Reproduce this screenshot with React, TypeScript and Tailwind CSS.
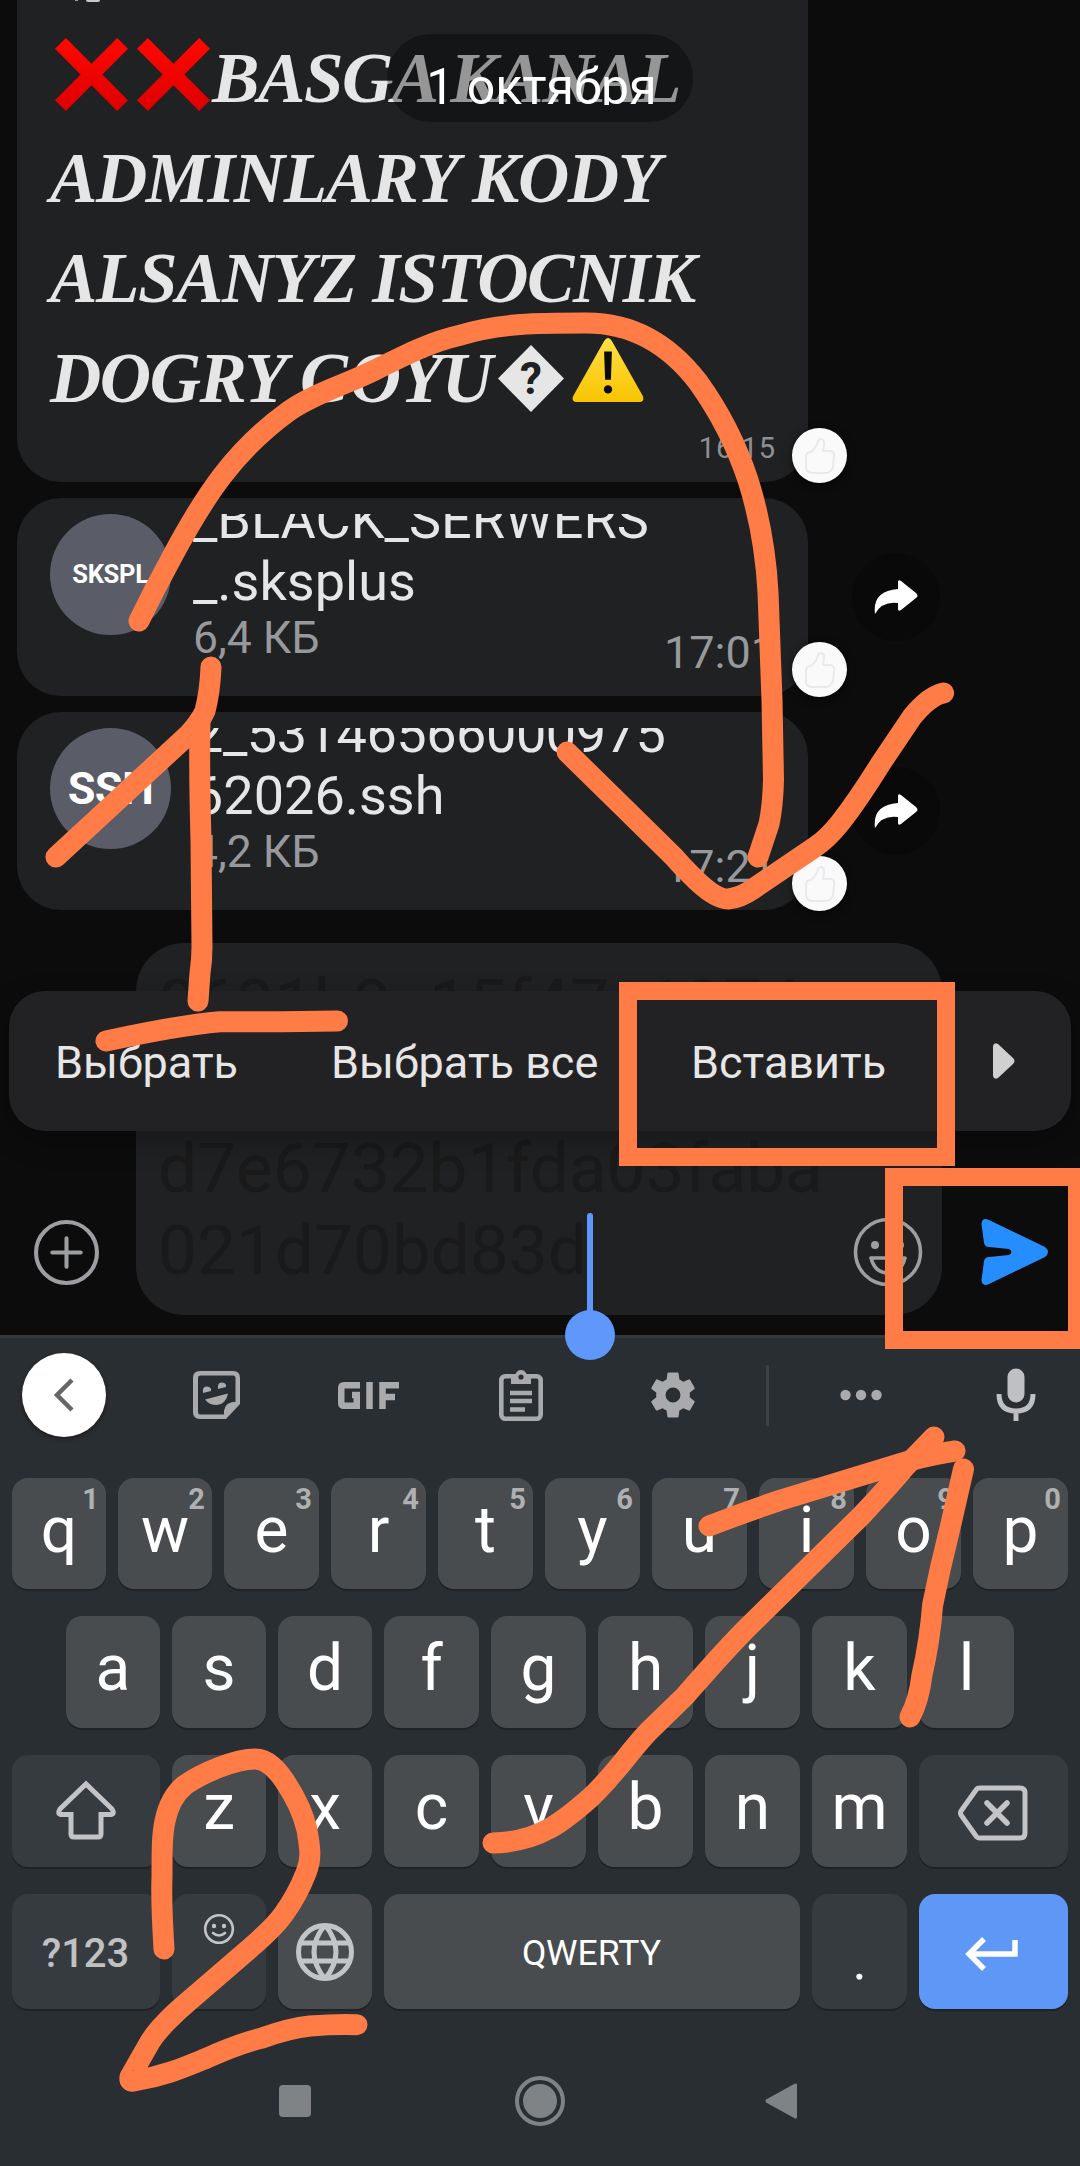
import React from "react";

const ink: string[] = [
  "M139 621Q155 588 172 557C205 495 235 450 289 411C315 393 345 385 375 370C405 355 430 342 461 335C500 323 540 323 584 323C640 322 675 352 698 382C724 418 738 450 748 480C760 518 766 555 768 592L772 700L773.5 780C773 800 772 810 769 824L758 857",
  "M567 752L616 800L674 857C684 869 690 874 697 881Q716 899 728 899Q740 898 753 889L815 847C824 841 832 833 840 823C855 804 868 784 881 763L912 717Q929 696 943.6 693",
  "M56 857L188 735Q200 722 205 711Q210 692 211 667",
  "M200 720Q199 770 201 840L202 947Q202 960 200 973L198 1001",
  "M106 1041Q180 1025 220 1021.7H282L337.5 1021",
  "M164 1949Q161 1900 162 1877C162 1850 162 1835 165 1821Q170 1797 185 1785C202 1773 235 1759 255 1759C268 1759 277 1770 284 1780C296 1798 304 1816 307 1830C310 1848 312 1858 306 1873Q297 1896 283 1915C272 1930 260 1939 248 1950L190 2000C172 2015 156 2032 150 2042L130 2077Q129 2082 134 2081C165 2076 185 2067 207 2058Q238 2044 262 2038Q290 2028 310 2026Q335 2024 357 2024.7",
  "M493 1843C540 1842 565 1820 590 1798C614 1776 632 1748 650 1730L685 1696C706 1672 725 1650 747 1628L861 1516Q892 1483 905 1467L934 1437",
  "M709 1526Q745 1512 781 1500L912 1460Q935 1454 955 1451",
  "M963.5 1469L950 1528L940 1570L932.6 1605Q930 1640 922 1675Q919 1700 910 1717",
];

function InkLayer() {
  return (
    <>
      <svg className="pointer-events-none absolute inset-0 z-40" width="1080" height="2166" viewBox="0 0 1080 2166" fill="none" stroke="#ff7c46" strokeWidth="21" strokeLinecap="round" strokeLinejoin="round">
        {ink.map((d) => (
          <path key={d} d={d} />
        ))}
      </svg>
      <div className="absolute left-[619px] top-[982px] z-40 h-[184px] w-[336px] border-[18px] border-[#ff7c46]" />
      <div className="absolute left-[885px] top-[1168px] z-40 h-[181px] w-[195px] border-[18px] border-r-[12px] border-[#ff7c46]" />
    </>
  );
}

function CrossMark() {
  return (
    <svg width="73" height="73" viewBox="0 0 74 74" className="shrink-0">
      <defs>
        <linearGradient id="cross" x1="0" y1="0" x2="0" y2="1">
          <stop offset="0" stopColor="#ff0800" />
          <stop offset="1" stopColor="#dd0000" />
        </linearGradient>
      </defs>
      <path d="M11 0L37 26L63 0L74 11L48 37L74 63L63 74L37 48L11 74L0 63L26 37L0 11Z" fill="url(#cross)" />
    </svg>
  );
}

function WarningSign() {
  return (
    <svg width="74" height="66" viewBox="0 0 76 68">
      <defs>
        <linearGradient id="warn" x1="0" y1="0" x2="0" y2="1">
          <stop offset="0" stopColor="#ffdf45" />
          <stop offset="1" stopColor="#f8c400" />
        </linearGradient>
      </defs>
      <path d="M38 1Q40 1 42 4L74 61Q76 67 70 67H6Q0 67 2 61L34 4Q36 1 38 1Z" fill="url(#warn)" />
      <path d="M34 15H42L41 44H35Z" fill="#0c0c0c" />
      <circle cx="38" cy="54" r="4.3" fill="#0c0c0c" />
    </svg>
  );
}

function UnknownGlyph() {
  return (
    <div className="relative flex h-[67px] w-[66px] items-center justify-center">
      <svg width="66" height="67" viewBox="0 0 66 67" className="absolute inset-0">
        <path d="M33 0L66 33.5L33 67L0 33.5Z" fill="#e6e6e6" />
      </svg>
      <span className="relative font-['Roboto',sans-serif] text-[44px] font-bold leading-none tracking-normal text-[#202122]">?</span>
    </div>
  );
}

function ThumbBadge() {
  return (
    <div className="absolute -bottom-px right-[-39px] z-10 flex size-[55px] items-center justify-center rounded-full bg-[#fafafa] shadow-[0_2px_8px_rgba(0,0,0,0.6)]">
      <svg width="32" height="36" viewBox="0 0 32 36" fill="none" stroke="#e9e9ee" strokeWidth="2" strokeLinejoin="round">
        <path d="M2 19Q2 14 7 14Q13 9 14 3Q15 1 17 1Q21 2 20 7L19 13H27Q31 14 30 19L29 29Q27 34 23 35H8Q2 34 2 30Z" />
      </svg>
    </div>
  );
}

function ShareButton() {
  return (
    <div className="ml-[44px] mt-[55px] flex size-[88px] items-center justify-center rounded-full bg-[#090909]">
      <svg width="44" height="34" viewBox="0 0 44 34" fill="#fff">
        <path d="M24 2Q24 -1 27 1L42 13Q45 16 42 18L27 30Q24 32 24 29V23Q8 21 1 34Q-2 11 24 9Z" />
      </svg>
    </div>
  );
}

type FileMsg = { ext: string; small: boolean; name: string[]; size: string; time: string };

const files: FileMsg[] = [
  { ext: "SKSPL", small: true, name: ["_BLACK_SERWERS", "_.sksplus"], size: "6,4 КБ", time: "17:01" },
  { ext: "SSH", small: false, name: ["2_53146566000975", "62026.ssh"], size: "4,2 КБ", time: "17:21" },
];

function FileMessage({ f }: { f: FileMsg }) {
  return (
    <div className="flex h-[198px]">
      <div className="relative flex w-[791px] rounded-[44px] bg-[#202122] pl-[33px] pt-4">
        <div className="flex size-[121px] shrink-0 items-center justify-center rounded-full bg-[#5a5d68] font-bold text-white">
          <span className={f.small ? "text-[25.5px] leading-none tracking-[-0.3px]" : "text-[45px] leading-none tracking-[-0.5px]"}>{f.ext}</span>
        </div>
        <div className="ml-[22px] grow">
          <div className="flex h-[100px] flex-col justify-end overflow-hidden text-[54px] leading-[62.7px] text-[#e6e6e6]">
            <p className={f.small ? "whitespace-pre" : "whitespace-pre tracking-[-0.45px]"}>{f.name[0]}</p>
            <p className="whitespace-pre">{f.name[1]}</p>
          </div>
          <p className="mt-[-1px] text-[44.5px] leading-[50px] text-[#97999c]">{f.size}</p>
        </div>
        <span className="absolute bottom-[18px] right-[32px] text-[45px] leading-[50px] text-[#97999c]">{f.time}</span>
        <ThumbBadge />
      </div>
      <ShareButton />
    </div>
  );
}

function LongMessage() {
  return (
    <div className="relative h-[482px] w-[791px] rounded-b-[44px] bg-[#202122]">
      <div className="absolute left-[58px] top-0 flex gap-2">
        <i className="block h-px w-[3px] bg-[#9a9a9a]" />
        <i className="block h-[2px] w-[14px] rounded-b bg-[#c8c8c8]" />
      </div>
      <div className="flex flex-col pl-[33px] pt-[28px] font-['Liberation_Serif',serif] text-[71px] font-bold italic leading-[100px] tracking-[-1.4px] text-[#e6e6e6]">
        <div className="flex h-[100px] whitespace-nowrap">
          <span className="mt-[10px] flex gap-[9px] pl-[5px]">
            <CrossMark />
            <CrossMark />
          </span>
          <span className="ml-[2px]">BASGA KANAL</span>
        </div>
        <span className="whitespace-nowrap">ADMINLARY KODY</span>
        <span className="whitespace-nowrap">ALSANYZ ISTOCNIK</span>
        <div className="flex h-[100px] whitespace-nowrap">
          <span className="w-[446px]">DOGRY GOYU</span>
          <span className="ml-[2px] mt-[17px] not-italic">
            <UnknownGlyph />
          </span>
          <span className="ml-[7px] mt-[9px]">
            <WarningSign />
          </span>
        </div>
      </div>
      <span className="absolute bottom-[17px] right-[32px] text-[29px] leading-[34px] tracking-[1px] text-[#8e9093]">16:15</span>
      <ThumbBadge />
    </div>
  );
}

function Chat() {
  return (
    <div className="relative h-[1335px] overflow-hidden bg-[#0c0c0c]">
      <div className="flex flex-col gap-4 pl-[17px]">
        <LongMessage />
        {files.map((f) => (
          <FileMessage key={f.ext} f={f} />
        ))}
      </div>
      <div className="absolute left-[387px] top-[34px] z-20 h-[88px] w-[306px] rounded-[44px] bg-black/35">
        <div className="mx-auto mt-[20px] h-[51px] overflow-hidden pl-[3px] text-center text-[50px] leading-[68px] text-white">
          <span className="-mt-[1px] block whitespace-nowrap">1 октября</span>
        </div>
      </div>
      <Composer />
      <ContextMenu />
    </div>
  );
}

function Composer() {
  return (
    <div className="mt-[33px] flex h-[372px] items-end">
      <div className="flex h-[126px] w-[136px] items-center pl-[33px]">
        <svg width="67" height="67" viewBox="0 0 66 66" fill="none" stroke="#9c9ea1" strokeWidth="4" strokeLinecap="round">
          <circle cx="33" cy="33" r="30" />
          <path d="M33 19V47M19 33H47" />
        </svg>
      </div>
      <div className="flex h-full w-[806px] items-end rounded-[48px] bg-[#202123] pl-[22px]">
        <div className="mb-[23px] grow whitespace-pre text-[69.3px] leading-[82px] text-[#1a1a1a]">
          <p className="mb-[82px]">8691b9a15f47c1974</p>
          <p>d7e6732b1fda03faba</p>
          <p>021d70bd83d</p>
        </div>
        <div className="flex h-[126px] w-[89px] shrink-0 items-center">
          <svg width="70" height="70" viewBox="0 0 70 70" fill="none" stroke="#9c9ea1" strokeWidth="3.6" strokeLinejoin="round">
            <circle cx="35" cy="35" r="32.5" />
            <circle cx="22" cy="28" r="4" fill="#9c9ea1" stroke="none" />
            <circle cx="47" cy="28" r="4" fill="#9c9ea1" stroke="none" />
            <path d="M18 41H52Q48 56 35 56Q22 56 18 41Z" />
          </svg>
        </div>
      </div>
      <div className="flex h-[126px] items-center pl-[39px]">
        <svg width="68" height="68" viewBox="0 0 68 68" fill="#268dff">
          <path d="M0.5 6Q1 -1 8 2L64 29Q70 34 64 39L8 66Q1 69 0.5 62L3 43Q4 39 8 39L28 37Q33 34 28 31L8 29Q4 29 3 25Z" />
        </svg>
      </div>
    </div>
  );
}

function ContextMenu() {
  return (
    <div className="absolute left-[9px] top-[991px] z-20 flex h-[140px] w-[1062px] items-center rounded-[36px] bg-[#222224] pl-[46px] text-[45px] leading-[52px] text-[#e6e6e6] shadow-[0_10px_28px_rgba(0,0,0,0.28)]">
      <span className="w-[276px] pt-[3px]">Выбрать</span>
      <span className="w-[360px] pt-[3px]">Выбрать все</span>
      <span className="w-[301px] pt-[3px]">Вставить</span>
      <svg width="23" height="36" viewBox="0 0 23 36" fill="#d0d0d0">
        <path d="M1 3Q2 -1 6 1L21 15Q24 18 21 21L6 35Q2 37 1 33Z" />
      </svg>
    </div>
  );
}

function KeyboardBar() {
  return (
    <div className="flex h-[119px] items-center pb-[5px] pl-[22px] pr-[44px] text-[#a9aaac]">
      <div className="flex size-[84px] items-center justify-center rounded-full bg-white shadow-[0_2px_4px_rgba(0,0,0,0.4)]">
        <svg width="22" height="34" viewBox="0 0 22 34" fill="none" stroke="#666" strokeWidth="4.5">
          <path d="M19 2L4 17L19 32" />
        </svg>
      </div>
      <svg className="ml-[87px]" width="47" height="48" viewBox="0 0 47 48" fill="currentColor">
        <path fillRule="evenodd" d="M7 0H40Q47 0 47 7V33L33 48H7Q0 48 0 41V7Q0 0 7 0ZM7 4.5Q5 4.5 5 7V41Q5 43.5 7 43.5H31V40Q32 32 40 31H42.5V7Q42.5 4.5 40 4.5Z" />
        <path d="M10 22Q9 15 14 15.5Q19 16 18 20ZM25 18Q24 11 29 11.5Q34 12 33 16ZM12 28.5L35 22.5Q33 33 24 34Q16 34 12 28.5Z" />
      </svg>
      <svg className="ml-[98px]" width="61" height="27" viewBox="0 0 61 27" fill="none" stroke="currentColor" strokeWidth="6.5">
        <path d="M22 3.25H6Q3.25 3.25 3.25 6V21Q3.25 23.75 6 23.75H18.75V13H14M31.5 0V27M44.5 27V3.25H61M44.5 15H57" />
      </svg>
      <svg className="ml-[100px]" width="44" height="52" viewBox="0 0 44 52" fill="none" stroke="currentColor">
        <rect x="2.3" y="7.3" width="39.4" height="42.4" rx="4" strokeWidth="4.6" />
        <path d="M12 6H16Q18 1 22 1Q26 1 28 6H32V15H12Z" fill="currentColor" stroke="none" />
        <circle cx="22" cy="8" r="2.6" fill="#292e32" stroke="none" />
        <path d="M11 24H33M11 32H33M11 40.5H26" strokeWidth="4.4" />
      </svg>
      <svg className="ml-[102px]" width="56" height="56" viewBox="0 0 24 24" fill="currentColor">
        <path d="M19.14 12.94c.04-.3.06-.61.06-.94 0-.32-.02-.64-.07-.94l2.03-1.58a.49.49 0 0 0 .12-.61l-1.92-3.32a.488.488 0 0 0-.59-.22l-2.39.96c-.5-.38-1.03-.7-1.62-.94l-.36-2.54a.484.484 0 0 0-.48-.41h-3.84c-.24 0-.43.17-.47.41l-.36 2.54c-.59.24-1.13.57-1.62.94l-2.39-.96c-.22-.08-.47 0-.59.22L2.74 8.87c-.12.21-.08.47.12.61l2.03 1.58c-.05.3-.09.63-.09.94s.02.64.07.94l-2.03 1.58a.49.49 0 0 0-.12.61l1.92 3.32c.12.22.37.29.59.22l2.39-.96c.5.38 1.03.7 1.62.94l.36 2.54c.05.24.24.41.48.41h3.84c.24 0 .44-.17.47-.41l.36-2.54c.59-.24 1.13-.56 1.62-.94l2.39.96c.22.08.47 0 .59-.22l1.92-3.32c.12-.22.07-.47-.12-.61zM12 15.2A3.2 3.2 0 1 1 12 8.8a3.2 3.2 0 0 1 0 6.4z" />
      </svg>
      <div className="ml-[65px] h-[61px] w-[3px] bg-[#3d4145]" />
      <svg className="ml-[71px]" width="42" height="12" viewBox="0 0 42 12" fill="currentColor">
        <circle cx="5.5" cy="6" r="5.2" />
        <circle cx="21" cy="6" r="5.2" />
        <circle cx="36.5" cy="6" r="5.2" />
      </svg>
      <svg className="ml-auto" width="40" height="54" viewBox="0 0 40 54" fill="none" stroke="#bfc0c2">
        <rect x="11.5" y="0.5" width="17" height="34" rx="8.5" fill="#bfc0c2" stroke="none" />
        <path d="M3 26Q3 43 20 43Q37 43 37 26M20 43V53" strokeWidth="5" />
      </svg>
    </div>
  );
}

function Key({ label, hint, narrow }: { label: string; hint?: string; narrow: boolean }) {
  return (
    <div className={`relative shrink-0 rounded-2xl bg-[#484c4e] text-center text-[64px] leading-[105px] text-white shadow-[0_2px_0_#1f2326] ${narrow ? "w-[94px]" : "w-[95px]"}`}>
      {label}
      {hint && <span className="absolute right-[7px] top-[5px] text-[29px] font-bold leading-[32px] text-[#afb0b1]">{hint}</span>}
    </div>
  );
}

function DarkKey({ className, children }: { className: string; children: React.ReactNode }) {
  return <div className={`flex shrink-0 items-center justify-center rounded-2xl shadow-[0_2px_0_#1f2326] ${className}`}>{children}</div>;
}

function Keyboard() {
  return (
    <div className="h-[831px] border-t-[3px] border-[#33383c] bg-[#292e32]">
      <KeyboardBar />
      <div className="flex flex-col gap-[27px] pt-[21px]">
        <div className="flex h-[111px] gap-3 px-3">
          {"qwertyuiop".split("").map((c, i) => (
            <Key key={c} label={c} hint={String((i + 1) % 10)} narrow={i < 2} />
          ))}
        </div>
        <div className="flex h-[112px] gap-3 px-[66px]">
          {"asdfghjkl".split("").map((c, i) => (
            <Key key={c} label={c} narrow={i < 3} />
          ))}
        </div>
        <div className="flex h-[112px] gap-3 px-3">
          <DarkKey className="w-[148px] bg-[#363b3f]">
            <svg width="62" height="60" viewBox="0 0 62 60" fill="none" stroke="#c3c4c6" strokeWidth="5" strokeLinejoin="round" className="mt-[-2px]">
              <path strokeLinejoin="miter" d="M5 29L31 4L57 29Q60 34 56 34.5H46V54Q46 57 43 57H19Q16 57 16 54V34.5H6Q2 34 5 29Z" />
            </svg>
          </DarkKey>
          {"zxcvbnm".split("").map((c, i) => (
            <Key key={c} label={c} narrow={i < 2} />
          ))}
          <DarkKey className="w-[149px] bg-[#363b3f]">
            <svg width="70" height="56" viewBox="0 0 70 56" fill="none" stroke="#c3c4c6" strokeWidth="5" strokeLinejoin="round" strokeLinecap="round" className="mr-[2px] mt-[4px]">
              <path d="M22 3H62Q67 3 67 8V48Q67 53 62 53H22Q19 53 18 51L3 30Q2 28 3 26L18 5Q19 3 22 3Z" />
              <path d="M29 18L49 38M49 18L29 38" strokeWidth="5.5" />
            </svg>
          </DarkKey>
        </div>
        <div className="flex h-[115px] gap-3 px-3">
          <DarkKey className="w-[148px] bg-[#363b3f] text-[40px] font-medium text-[#c0c1c3]">
            <span className="pr-px pt-[4px]">?123</span>
          </DarkKey>
          <DarkKey className="w-[94px] bg-[#363b3f]">
            <svg width="32" height="32" viewBox="0 0 32 32" fill="none" stroke="#c3c4c6" strokeWidth="2.6" className="mb-[45px]">
              <circle cx="16" cy="16" r="13.8" />
              <circle cx="11" cy="13" r="2.2" fill="#c3c4c6" stroke="none" />
              <circle cx="21" cy="13" r="2.2" fill="#c3c4c6" stroke="none" />
              <path d="M10 20Q16 25 22 20" strokeLinecap="round" />
            </svg>
          </DarkKey>
          <DarkKey className="w-[94px] bg-[#484c4e]">
            <svg width="60" height="60" viewBox="0 0 60 60" fill="none" stroke="#c3c4c6" strokeWidth="5">
              <circle cx="30" cy="30" r="26.5" />
              <path d="M30 3Q8 30 30 57M30 3Q52 30 30 57M6 21H54M6 39H54" />
            </svg>
          </DarkKey>
          <DarkKey className="w-[416px] bg-[#484c4e] text-[35.5px] text-white">
            <span className="pr-px pt-[4px]">QWERTY</span>
          </DarkKey>
          <DarkKey className="w-[95px] bg-[#363b3f]">
            <span className="mt-[18px] text-[54px] leading-[60px] text-white">.</span>
          </DarkKey>
          <DarkKey className="w-[149px] bg-[#5f97f6]">
            <svg width="54" height="34" viewBox="0 0 54 34" fill="none" stroke="#fff" strokeWidth="5.5" className="mr-[3px] mt-[5px]">
              <path d="M50 3V17H5M19 2L4 17L19 32" />
            </svg>
          </DarkKey>
        </div>
      </div>
      <div className="flex items-center pl-[279px] pt-[67px]">
        <div className="size-[32px] rounded-sm bg-[#808386]" />
        <svg className="ml-[204px]" width="50" height="50" viewBox="0 0 50 50" fill="#808386">
          <circle cx="25" cy="25" r="23" fill="none" stroke="#808386" strokeWidth="4" />
          <circle cx="25" cy="25" r="17" />
        </svg>
        <svg className="ml-[200px]" width="32" height="36" viewBox="0 0 32 36" fill="#808386">
          <path d="M30 0.5Q32 0 32 2V34Q32 36 30 35.5L1 19.5Q0 18 1 16.5Z" />
        </svg>
      </div>
    </div>
  );
}

export default function App() {
  return (
    <div className="relative h-[2166px] w-[1080px] overflow-hidden bg-[#0c0c0c] font-['Roboto',sans-serif]">
      <Chat />
      <Keyboard />
      <div className="absolute left-[587px] top-[1213px] z-30 h-[110px] w-[6px] rounded-t bg-[#6097fb]" />
      <div className="absolute left-[565px] top-[1310px] z-30 size-[50px] rounded-full bg-[#6097fb]" />
      <InkLayer />
    </div>
  );
}
